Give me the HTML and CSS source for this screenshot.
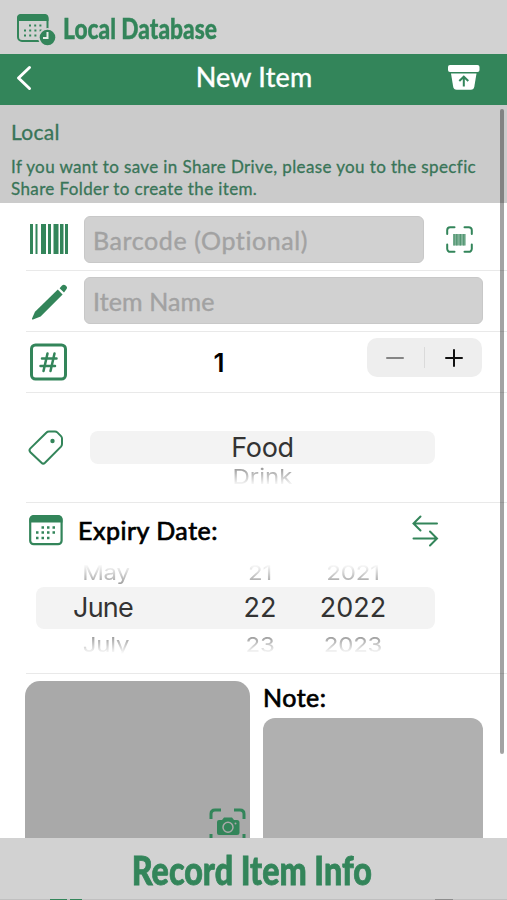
FILE: index.html
```html
<!DOCTYPE html>
<html lang="en">

<head>
    <meta charset="UTF-8">
    <meta name="viewport" content="width=device-width, initial-scale=1.0">
    <title>New Item</title>
    <link rel="stylesheet" href="styles.css">
</head>

<body>
    <header class="topbar">
        <svg class="logo" width="40" height="34" viewBox="0 0 40 34">
            <rect x="2" y="2" width="29.5" height="26" rx="4" fill="none" stroke="#33855a" stroke-width="2"/>
            <path d="M1 8V5a4 4 0 0 1 4-4h23.500a4 4 0 0 1 4 4v3z" fill="#33855a"/>
            <path d="M13 12.500h14M8 17.500h19M8 22.500h14" stroke="#33855a" stroke-width="2" stroke-dasharray="2 3.200"/>
            <circle cx="31.500" cy="24.500" r="9.500" fill="#d2d2d2"/>
            <circle cx="31.500" cy="24.500" r="7.800" fill="#33855a"/>
            <path d="M31.500 19v6H27" fill="none" stroke="#e9efe9" stroke-width="2"/>
        </svg>
        <span class="brand">Local Database</span>
    </header>

    <nav class="navbar">
        <svg width="16" height="26" viewBox="0 0 16 26">
            <path d="M13.500 2.500L2.500 13l11 10.500" fill="none" stroke="#fff" stroke-width="3" stroke-linecap="round" stroke-linejoin="round"/>
        </svg>
        <h1 class="title">New Item</h1>
        <svg width="32" height="26" viewBox="0 0 32 26">
            <rect x="0" y="0" width="31.500" height="7" rx="2" fill="#fff"/>
            <path d="M3 8.500h25.500l-2.200 13.300a3.500 3.500 0 0 1-3.400 2.900H8.600a3.500 3.500 0 0 1-3.400-2.900z" fill="#fff"/>
            <path d="M15.800 21.500v-9.300M11.300 15.900l4.500-4.200 4.500 4.200" fill="none" stroke="#33855a" stroke-width="2"/>
        </svg>
    </nav>

    <main class="content">
        <section class="info">
            <h2>Local</h2>
            <p>If you want to save in Share Drive, please you to the specfic<br>Share Folder to create the item.</p>
        </section>

        <form class="form">
            <div class="row row-barcode">
                <svg class="icon" width="39" height="30" viewBox="0 0 39 30" fill="#33855a">
                    <path d="M1 0h3v30H1zM6.500 0h2v30h-2zM12 0h5v30h-5zM19 0h3v30h-3zM24.500 0h5v30h-5zM31 0h3.500v30H31zM36 0h3v30h-3z"/>
                </svg>
                <div class="field field-barcode">Barcode (Optional)</div>
                <svg class="scan" width="27" height="27" viewBox="0 0 27 27">
                    <path d="M1.200 8V4.200a3 3 0 0 1 3-3H8.500M18.500 1.200h4.300a3 3 0 0 1 3 3V8M25.800 18.500v4.300a3 3 0 0 1-3 3h-4.300M8.500 25.800H4.200a3 3 0 0 1-3-3v-4.300" fill="none" stroke="#33855a" stroke-width="2" stroke-linecap="round"/>
                    <path d="M7.300 8h12.400v11.500H7.300z" fill="#7fb297"/>
                    <path d="M8 8v11.500M10.800 8v11.500M14.300 8v11.500M17.800 8v11.500" stroke="#4b916c" stroke-width="1.100"/>
                </svg>
            </div>

            <div class="row row-name">
                <svg class="icon" width="38" height="36" viewBox="0 0 38 36" fill="#33855a">
                    <path d="M25.800 5.600l4.800 4.800L8.600 32.400 1 35.500q-1.400.3-1-1L3 27.800z"/>
                    <path d="M27.600 4.200L30 1.500q1.800-1.700 3.600 0l.6.600q1.700 1.800 0 3.400L32 8.400z"/>
                </svg>
                <div class="field field-name">Item Name</div>
            </div>

            <div class="row row-count">
                <svg class="icon" width="38" height="38" viewBox="0 0 38 38" fill="none" stroke="#33855a">
                    <rect x="2.500" y="2" width="34" height="34" rx="4" stroke-width="3"/>
                    <path d="M18.500 10.500l-4 17.500M25.500 10.500l-4 17.500M13 15.500h14.500M11.500 23H26" stroke-width="2.500" stroke-linecap="round"/>
                </svg>
                <span class="count">1</span>
                <div class="stepper">
                    <svg width="18" height="18" viewBox="0 0 18 18"><path d="M1 9h16" stroke="#858585" stroke-width="2" stroke-linecap="round"/></svg>
                    <span class="divider"></span>
                    <svg width="18" height="18" viewBox="0 0 18 18"><path d="M1 9h16M9 1v16" stroke="#111" stroke-width="2" stroke-linecap="round"/></svg>
                </div>
            </div>

            <div class="row row-tag">
                <svg class="icon" width="36" height="36" viewBox="0 0 36 36">
                    <path d="M18.500 2.500Q19.500 1.400 21 1.400H27q1.300 0 2.300 1L33 6.100q1 1 1 2.400V14q0 1.500-1 2.600L17 32.800q-1.800 1.700-3.500 0L2.400 22.200q-1.800-1.900 0-3.800z" fill="none" stroke="#33855a" stroke-width="2"/>
                    <circle cx="24.500" cy="11" r="2.200" fill="#33855a"/>
                </svg>
                <div class="picker picker-tag">
                    <div class="selected">Food</div>
                    <div class="ghost below">Drink</div>
                </div>
            </div>

            <div class="row row-date">
                <div class="date-head">
                    <svg width="34" height="31" viewBox="0 0 34 31">
                        <rect x="1.200" y="1.200" width="31.400" height="28" rx="3.500" fill="none" stroke="#33855a" stroke-width="2.200"/>
                        <path d="M.5 7.500v-3a4 4 0 0 1 4-4h25a4 4 0 0 1 4 4v3z" fill="#33855a"/>
                        <path d="M12.500 12.500h14M7 17.500h20M7 23h14" stroke="#33855a" stroke-width="2.500" stroke-dasharray="2.500 3"/>
                    </svg>
                    <span class="label expiry">Expiry Date:</span>
                    <svg class="swap" width="27" height="32" viewBox="0 0 27 32" fill="none" stroke="#33855a" stroke-width="2" stroke-linecap="round">
                        <path d="M25 8.500H2M8.500 1.500L1.500 8.500l7 7M1.500 23.500h23M18 16.500l7 7-7 7"/>
                    </svg>
                </div>
                <div class="picker picker-date">
                    <div class="ghost above"><span>May</span><span>21</span><span>2021</span></div>
                    <div class="selected"><span class="month">June</span><span>22</span><span>2022</span></div>
                    <div class="ghost below"><span>July</span><span>23</span><span>2023</span></div>
                </div>
            </div>

            <div class="media">
                <div class="photo">
                    <svg width="38" height="38" viewBox="0 0 38 38">
                        <path d="M2 11V6q0-4 4-4h6M25 2h6q4 0 4 4v5M35 26v5q0 4-4 4h-6M12 35H6q-4 0-4-4v-5" fill="none" stroke="#33855a" stroke-width="3"/>
                        <path d="M10 12h3l2-2.500h8l2 2.500h3q2.500 0 2.500 2.500v10.500q0 2-2.500 2H10q-2 0-2-2V14q0-2 2-2z" fill="#33855a"/>
                        <circle cx="19" cy="19.200" r="5" fill="none" stroke="#a9a9a9" stroke-width="1.500"/>
                        <circle cx="26.500" cy="15.500" r="1" fill="#a9a9a9"/>
                    </svg>
                </div>
                <div class="note">
                    <span class="label note-label">Note:</span>
                    <div class="note-box"></div>
                </div>
            </div>
        </form>
        <div class="scrollbar"></div>
    </main>

    <footer class="footer">
        <span class="record">Record Item Info</span>
        <div class="tabs-edge"></div>
    </footer>
</body>

</html>
```
FILE: styles.css
```css
* {
    box-sizing: border-box;
}

body {
    margin: 0;
    height: 900px;
    overflow: hidden;
    display: flex;
    flex-direction: column;
    background-color: #fff;
    font-family: Lato, sans-serif;
    color: #000;
}

svg {
    display: block;
    flex: none;
}

h1,
h2,
p {
    margin: 0;
}

.topbar {
    height: 54px;
    flex: none;
    display: flex;
    align-items: flex-start;
    padding: 13px 0 0 16px;
    background-color: #d2d2d2;
}

.brand {
    margin: -2px 0 0 7px;
    font-size: 28px;
    line-height: 34px;
    font-weight: 900;
    white-space: nowrap;
    color: #33855a;
    -webkit-text-stroke: 0.4px #33855a;
    transform: scaleX(0.812);
    transform-origin: 0 50%;
}

.navbar {
    height: 51px;
    flex: none;
    display: flex;
    align-items: center;
    padding: 0 27px 3px 16px;
    background-color: #33855a;
}

.title {
    flex: 1;
    padding: 0 0 3px 28px;
    text-align: center;
    font-size: 27px;
    line-height: 32px;
    font-weight: 400;
    letter-spacing: 0.2px;
    color: #fff;
    -webkit-text-stroke: 0.4px #fff;
}

.content {
    position: relative;
    height: 733px;
    flex: none;
    overflow: hidden;
}

.info {
    height: 98px;
    padding: 14px 11px 0;
    background-color: #cbcbcb;
    color: #397558;
    -webkit-text-stroke: 0.3px #397558;
}

.info h2 {
    font-size: 21px;
    line-height: 26px;
    font-weight: 400;
    letter-spacing: 0.3px;
}

.info p {
    margin-top: 11px;
    font-size: 17px;
    line-height: 22px;
    letter-spacing: 0.38px;
    white-space: nowrap;
}

.row {
    display: flex;
    margin-left: 26px;
    border-bottom: 1px solid #e9e9e9;
}

.icon {
    margin-left: 3px;
}

.row-barcode {
    height: 68px;
    padding-top: 13px;
}

.row-barcode .icon {
    margin-top: 8px;
}

.field {
    height: 47px;
    border: 1px solid #c8c8c8;
    border-radius: 6px;
    background-color: #d1d1d1;
    padding-left: 8px;
    font-size: 25px;
    line-height: 46px;
    color: #a2a2a2;
    -webkit-text-stroke: 0.4px #a2a2a2;
}

.field-barcode {
    width: 340px;
    margin-left: 16px;
    letter-spacing: 0.6px;
}

.scan {
    margin: 10px 0 0 22px;
}

.row-name {
    height: 61px;
    padding-top: 6px;
}

.row-name .icon {
    margin: 7px 0 0 6px;
}

.field-name {
    width: 399px;
    margin-left: 14px;
    letter-spacing: 0.1px;
}

.row-count {
    height: 61px;
    padding-top: 6px;
}

.row-count .icon {
    margin-top: 5px;
}

.count {
    width: 300px;
    padding-left: 4px;
    text-align: center;
    font-family: Inter, sans-serif;
    font-size: 26px;
    line-height: 49px;
    font-weight: 600;
}

.stepper {
    width: 115px;
    height: 39px;
    display: flex;
    align-items: center;
    justify-content: space-between;
    padding: 0 19px;
    border-radius: 10px;
    background-color: #eee;
}

.divider {
    width: 1px;
    height: 21px;
    background-color: #dadada;
}

.row-tag {
    height: 110px;
    padding-top: 37px;
}

.row-tag .icon {
    margin-left: 2px;
}

.picker {
    font-family: Inter, sans-serif;
    color: #333;
}

.picker-tag {
    width: 345px;
    margin: 1px 0 0 26px;
    text-align: center;
}

.selected {
    border-radius: 8px;
    background-color: #f3f3f3;
    font-size: 27px;
}

.picker-tag .selected {
    height: 33px;
    line-height: 34px;
    letter-spacing: -0.3px;
}

/* neighbouring values, squashed and faded like a wheel */
.ghost {
    height: 26px;
    font-size: 24px;
    line-height: 26px;
    color: #a0a0a0;
    transform: scaleY(0.85);
}

.below {
    -webkit-mask-image: linear-gradient(#000 15%, transparent 90%);
    mask-image: linear-gradient(#000 15%, transparent 90%);
}

.above {
    -webkit-mask-image: linear-gradient(transparent 5%, #000 95%);
    mask-image: linear-gradient(transparent 5%, #000 95%);
}

.picker-tag .ghost {
    font-size: 24px;
}

.row-date {
    height: 171px;
    flex-direction: column;
}

.date-head {
    height: 58px;
    display: flex;
    align-items: flex-start;
    padding: 12px 0 0 3px;
}

.label {
    font-size: 25px;
    line-height: 31px;
    letter-spacing: 0.5px;
    -webkit-text-stroke: 0.7px #000;
}

.expiry {
    width: 334px;
    margin-left: 15px;
}

.picker-date {
    width: 399px;
    margin-left: 10px;
}

.picker-date > div {
    display: grid;
    grid-template-columns: 134px 180px 6px;
    justify-items: center;
}

.picker-date .selected {
    height: 42px;
    line-height: 42px;
}

.month {
    letter-spacing: -0.8px;
}

.picker-date .ghost {
    grid-template-columns: 140px 168px 18px;
    letter-spacing: -0.2px;
}

.picker-date .above {
    line-height: 24px;
}

.picker-date .below {
    margin-top: 3px;
}

.media {
    display: flex;
    gap: 13px;
    padding: 7px 0 0 25px;
}

.photo {
    width: 225px;
    height: 190px;
    padding: 127px 0 0 184px;
    border-radius: 15px;
    background-color: #a9a9a9;
}

.note {
    width: 220px;
}

.note-label {
    display: block;
    height: 37px;
    line-height: 32px;
}

.note-box {
    height: 160px;
    border-radius: 12px;
    background-color: #b0b0b0;
}

.scrollbar {
    position: absolute;
    top: 4px;
    right: 3px;
    width: 4px;
    height: 645px;
    border-radius: 2px;
    background-color: rgba(0, 0, 0, 0.36);
}

.footer {
    flex: 1;
    display: flex;
    flex-direction: column;
    justify-content: space-between;
    align-items: center;
    background-color: #d2d2d2;
}

.record {
    margin: 8px 0 0 -3px;
    font-size: 40px;
    line-height: 48px;
    font-weight: 900;
    white-space: nowrap;
    color: #33855a;
    -webkit-text-stroke: 0.8px #33855a;
    transform: scaleX(0.807);
}

.tabs-edge {
    width: 100%;
    height: 1px;
    background: linear-gradient(90deg, #c0c0c0 50px, #33855a 50px 67px, #c0c0c0 67px 70px, #33855a 70px 82px, #c0c0c0 82px 435px, #8d8d8d 435px 453px, #c0c0c0 453px);
}
```
